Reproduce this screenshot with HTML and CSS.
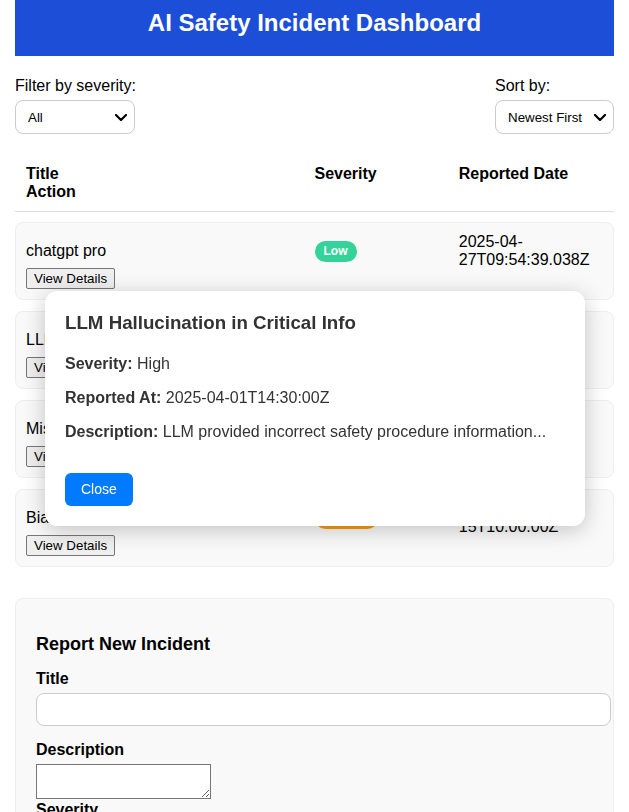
FILE: index.html
```html
<!DOCTYPE html>
<html lang="en">
<head>
<meta charset="utf-8">
<title>AI Safety Incident Dashboard</title>
<link rel="stylesheet" href="styles.css">
</head>
<body>
<div class="app">
  <header class="topbar">
    <h1>AI Safety Incident Dashboard</h1>
  </header>

  <div class="controls">
    <div class="control">
      <label for="filter">Filter by severity:</label>
      <select id="filter" class="select select-filter">
        <option>All</option>
        <option>Low</option>
        <option>Medium</option>
        <option>High</option>
      </select>
    </div>
    <div class="control">
      <label for="sort">Sort by:</label>
      <select id="sort" class="select select-sort">
        <option>Newest First</option>
        <option>Oldest First</option>
      </select>
    </div>
  </div>

  <div class="table-head">
    <div>Title</div>
    <div>Severity</div>
    <div>Reported Date</div>
    <div>Action</div>
  </div>

  <div class="rows">
    <div class="row">
      <div class="cell-title">
        <div class="title">chatgpt pro</div>
        <button class="btn-details">View Details</button>
      </div>
      <div class="cell-sev"><span class="badge badge-low">Low</span></div>
      <div class="cell-date">2025-04-27T09:54:39.038Z</div>
    </div>
    <div class="row">
      <div class="cell-title">
        <div class="title">LLM Hallucination in Critical Info</div>
        <button class="btn-details">View Details</button>
      </div>
      <div class="cell-sev"><span class="badge badge-high">High</span></div>
      <div class="cell-date">2025-04-01T14:30:00Z</div>
    </div>
    <div class="row">
      <div class="cell-title">
        <div class="title">Misleading Medical Advice</div>
        <button class="btn-details">View Details</button>
      </div>
      <div class="cell-sev"><span class="badge badge-high">High</span></div>
      <div class="cell-date">2025-03-20T09:15:00Z</div>
    </div>
    <div class="row">
      <div class="cell-title">
        <div class="title">Bias in Automated Screening</div>
        <button class="btn-details">View Details</button>
      </div>
      <div class="cell-sev"><span class="badge badge-medium">Medium</span></div>
      <div class="cell-date">2025-03-15T10:00:00Z</div>
    </div>
  </div>

  <form class="report">
    <h3>Report New Incident</h3>
    <label class="field-label" for="f-title">Title</label>
    <input id="f-title" class="text-input" type="text">
    <label class="field-label" for="f-desc">Description</label>
    <textarea id="f-desc" class="text-area"></textarea>
    <label class="field-label" for="f-sev">Severity</label>
    <select id="f-sev" class="select">
      <option>Low</option>
      <option>Medium</option>
      <option>High</option>
    </select>
  </form>
</div>

<div class="modal">
  <h3>LLM Hallucination in Critical Info</h3>
  <p><strong>Severity:</strong> High</p>
  <p><strong>Reported At:</strong> 2025-04-01T14:30:00Z</p>
  <p><strong>Description:</strong> LLM provided incorrect safety procedure information...</p>
  <button class="btn-close">Close</button>
</div>
</body>
</html>
```

FILE: styles.css
```css
html, body {
  margin: 0;
  padding: 0;
  background: #ffffff;
}

body {
  font-family: "Liberation Sans", Arial, sans-serif;
  font-size: 16px;
  color: #000;
}

.app {
  padding: 0 15px;
}

.topbar {
  background: #1d4ed8;
  color: #fff;
  text-align: center;
  padding: 9px 0 19px;
}

.topbar h1 {
  margin: 0;
  font-size: 24px;
  font-weight: bold;
}

.controls {
  display: flex;
  justify-content: space-between;
  margin-top: 21px;
}

.control label {
  display: block;
  margin-bottom: 5px;
}

.select {
  -webkit-appearance: none;
  appearance: none;
  font-family: "Liberation Sans", Arial, sans-serif;
  font-size: 13.33px;
  height: 34px;
  padding: 0 24px 0 12px;
  border: 1px solid #ccc;
  border-radius: 8px;
  background-color: #fff;
  background-image: url("data:image/svg+xml,%3Csvg xmlns='http://www.w3.org/2000/svg' viewBox='0 0 12 7'%3E%3Cpath d='M1 1 L6 6 L11 1' fill='none' stroke='%23000' stroke-width='2.2' stroke-linecap='round' stroke-linejoin='round'/%3E%3C/svg%3E");
  background-repeat: no-repeat;
  background-position: right 7px center;
  background-size: 12px 7px;
  color: #000;
  box-sizing: border-box;
}

.select-filter {
  width: 120px;
}

.select-sort {
  width: 119px;
}

.table-head {
  display: grid;
  grid-template-columns: 2fr 1fr 1fr;
  padding: 10px 11px;
  margin-top: 21px;
  font-weight: bold;
  border-bottom: 1px solid #ddd;
}

.rows {
  margin-top: 10px;
}

.row {
  display: grid;
  grid-template-columns: 2fr 1fr 1fr;
  align-items: start;
  padding: 10px;
  margin-bottom: 11px;
  background: #f9f9f9;
  border: 1px solid #eee;
  border-radius: 8px;
}

.title {
  margin: 9px 0 8px;
}

.btn-details {
  font-family: "Liberation Sans", Arial, sans-serif;
  font-size: 13.33px;
  line-height: 17px;
  padding: 1px 7px;
  border: 1px solid #767676;
  border-radius: 2px;
  background: #efefef;
  color: #000;
}

.cell-sev {
  padding-top: 8px;
}

.badge {
  display: inline-block;
  padding: 4px 9px;
  line-height: 13px;
  font-size: 12px;
  font-weight: bold;
  color: #fff;
  border-radius: 12px;
}

.badge-low { background: #34d399; }
.badge-medium { background: #f59e0b; }
.badge-high { background: #ef4444; }

.report {
  margin-top: 31px;
  padding: 20px;
  background: #f9f9f9;
  border: 1px solid #eee;
  border-radius: 8px;
}

.report h3 {
  font-size: 18px;
  margin: 15px 0 15px;
}

.field-label {
  display: block;
  font-weight: bold;
  margin-bottom: 5px;
}

.text-input {
  display: block;
  width: 100%;
  height: 16px;
  padding: 7px 8px 8px;
  margin: 0 0 15px;
  border: 1px solid #ccc;
  border-radius: 8px;
  font-size: 13.33px;
  background: #fff;
}

.text-area {
  width: 175px;
  height: 35px;
  box-sizing: border-box;
  border: 1px solid #767676;
  background: #fff;
  vertical-align: bottom;
  margin-bottom: 2px;
}

.modal {
  position: fixed;
  left: 45px;
  top: 291px;
  width: 500px;
  padding: 21px 20px 20px;
  background: #fff;
  border-radius: 12px;
  box-shadow: 0 4px 22px rgba(0, 0, 0, 0.22);
  color: #333;
}

.modal h3 {
  margin: 0 0 21px;
  font-size: 18.72px;
}

.modal p {
  margin: 16px 0;
}

.btn-close {
  margin-top: 16px;
  padding: 8px 16px;
  line-height: 17px;
  font-family: "Liberation Sans", Arial, sans-serif;
  font-size: 14px;
  color: #fff;
  background: #007bff;
  border: none;
  border-radius: 6px;
}
```
